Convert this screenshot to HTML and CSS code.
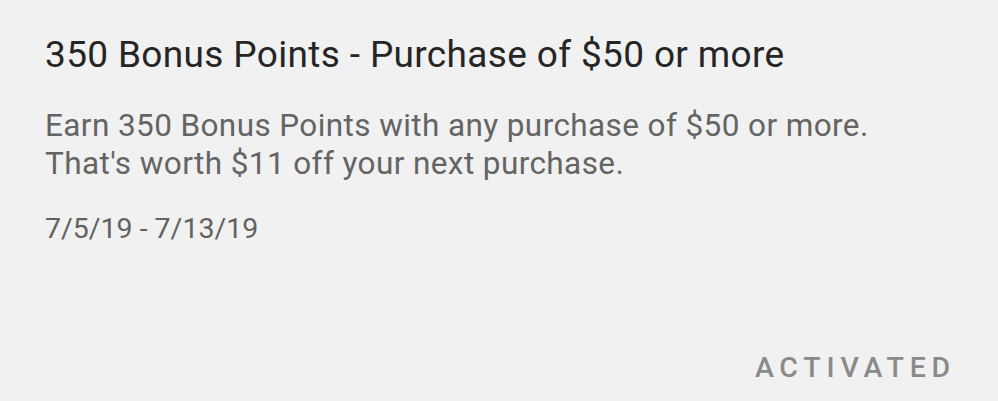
FILE: index.html
```html
<!DOCTYPE html>
<html>
<head>
<meta charset="utf-8">
<link rel="stylesheet" href="styles.css">
</head>
<body>
<div class="card">
  <div class="title">350 Bonus Points - Purchase of $50 or more</div>
  <div class="desc">Earn 350 Bonus Points with any purchase of $50 or more.<br>That's worth $11 off your next purchase.</div>
  <div class="dates">7/5/19 - 7/13/19</div>
  <div class="actions"><span class="status">ACTIVATED</span></div>
</div>
</body>
</html>
```
FILE: styles.css
```css
html, body { margin: 0; padding: 0; }
body { background: #f1f1f1; font-family: Roboto, "Noto Sans", sans-serif; width: 998px; height: 401px; overflow: hidden; }
.card { display: flex; flex-direction: column; padding: 33px 42px 0 45px; box-sizing: border-box; height: 401px; }
.title { font-size: 37px; line-height: 44px; letter-spacing: 0.35px; color: #252525; }
.desc { margin-top: 29.5px; font-size: 31.5px; line-height: 38px; letter-spacing: 0.4px; color: #646464; }
.dates { margin-top: 29px; font-size: 28.5px; line-height: 34px; color: #626262; }
.actions { margin-top: auto; margin-bottom: 16px; display: flex; justify-content: flex-end; }
.status { font-size: 28.5px; font-weight: 500; letter-spacing: 5.8px; color: #8a8a8a; line-height: 34px; }
```
